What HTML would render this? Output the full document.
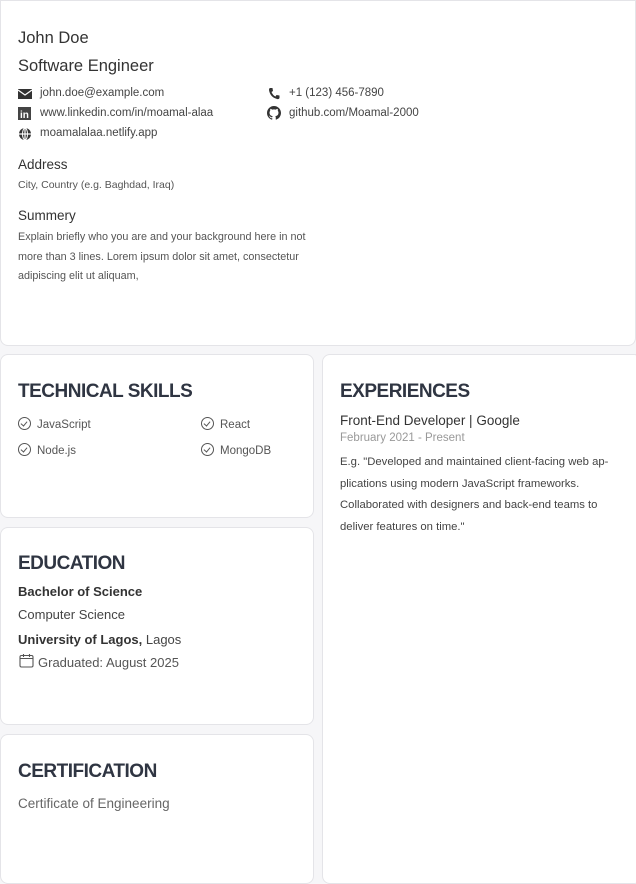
<!DOCTYPE html>
<html><head><style>
*{box-sizing:border-box;margin:0;padding:0}
body{width:636px;height:871px;background:#f6f6f8;font-family:"Liberation Sans",sans-serif;color:#333a45;position:relative;overflow:hidden}
.card{position:absolute;background:#fff;border:1px solid #e4e4e8;border-radius:8px}
.t{position:absolute;white-space:nowrap}
h2{position:absolute;font-size:19px;font-weight:bold;color:#2f3542;letter-spacing:-0.5px}
.s{font-size:11.5px;color:#444}
svg{position:absolute}
.ck{display:inline-block;width:13px;height:13px;border:1.3px solid #555;border-radius:50%;vertical-align:-2px;margin-right:6px;position:relative}
.ck:after{content:"";position:absolute;left:3px;top:1.5px;width:3px;height:5px;border:solid #555;border-width:0 1.3px 1.3px 0;transform:rotate(40deg)}
</style></head><body>
<div class="card" style="left:0;top:0;width:636px;height:346px;border-radius:0 0 8px 8px"></div>
<div class="t" style="left:18px;top:29px;font-size:16.5px;color:#333">John Doe</div>
<div class="t" style="left:18px;top:57px;font-size:16.5px;color:#333">Software Engineer</div>

<svg style="left:18px;top:88px" width="14" height="12" viewBox="0 0 14 12"><rect x="0" y="1" width="14" height="10" fill="#333"/><path d="M0 2 L7 7 L14 2" stroke="#fff" stroke-width="1.3" fill="none"/></svg>
<div class="t s" style="left:40px;top:87px">john.doe@example.com</div>
<svg style="left:18px;top:107px" width="13" height="13"><rect width="13" height="13" fill="#444"/><text x="2" y="11" font-size="10" font-weight="bold" fill="#fff" font-family="Liberation Sans">in</text></svg>
<div class="t s" style="left:40px;top:107px">www.linkedin.com/in/moamal-alaa</div>
<svg style="left:18px;top:127px" width="14" height="14" viewBox="0 0 14 14"><circle cx="7" cy="7" r="6" fill="#333"/><path d="M1 7h12M7 1v12" stroke="#fff" stroke-width="1.2"/><ellipse cx="7" cy="7" rx="2.5" ry="6" fill="none" stroke="#fff" stroke-width="1"/></svg>
<div class="t s" style="left:40px;top:127px">moamalalaa.netlify.app</div>
<svg style="left:268px;top:87px" width="12" height="13" viewBox="0 0 12 13"><path d="M2 1 L4.5 1 L5 4 L3.5 5 Q5 8.5 7.5 9.5 L8.5 8 L11.5 8.5 L11.5 11 Q11 12.5 9 12 Q2 10 1 3 Q1 1.2 2 1Z" fill="#333"/></svg>
<div class="t s" style="left:289px;top:87px">+1 (123) 456-7890</div>
<svg style="left:267px;top:106px" width="14" height="14" viewBox="0 0 16 16"><path fill="#333" d="M8 0C3.580 0 0 3.58 0 8c0 3.54 2.29 6.53 5.47 7.59.4.07.55-.17.55-.38v-1.330c-2.23.48-2.7-1.07-2.7-1.07-.36-.92-.89-1.170-.89-1.17-.73-.5.05-.49.05-.49.8.06 1.23.83 1.23.83.72 1.23 1.87.87 2.33.67.07-.52.28-.87.51-1.07-1.78-.2-3.64-.89-3.64-3.95 0-.87.31-1.59.82-2.15-.08-.2-.36-1.02.08-2.12 0 0 .67-.21 2.2.82a7.6 7.6 0 014 0c1.53-1.04 2.2-.82 2.2-.82.44 1.1.16 1.92.08 2.12.51.56.82 1.27.82 2.15 0 3.070-1.87 3.75-3.65 3.95.29.25.54.73.54 1.48v2.2c0 .21.15.46.55.38A8 8 0 0016 8c0-4.420-3.58-8-8-8z"/></svg>
<div class="t s" style="left:289px;top:107px">github.com/Moamal-2000</div>

<div class="t" style="left:18px;top:157px;font-size:13.5px;color:#333">Address</div>
<div class="t" style="left:18px;top:179px;font-size:10.5px;color:#555">City, Country (e.g. Baghdad, Iraq)</div>
<div class="t" style="left:18px;top:208px;font-size:13.5px;color:#333">Summery</div>
<div style="position:absolute;left:18px;top:228px;width:304px;font-size:10.8px;line-height:19.5px;color:#555">Explain briefly who you are and your background here in not more than 3 lines. Lorem ipsum dolor sit amet, consectetur adipiscing elit ut aliquam,</div>

<div class="card" style="left:0;top:354px;width:314px;height:164px"></div>
<h2 style="left:18px;top:381px">TECHNICAL SKILLS</h2>
<div class="t s" style="left:18px;top:417px;color:#555"><span class="ck"></span>JavaScript</div>
<div class="t s" style="left:201px;top:417px;color:#555"><span class="ck"></span>React</div>
<div class="t s" style="left:18px;top:443px;color:#555"><span class="ck"></span>Node.js</div>
<div class="t s" style="left:201px;top:443px;color:#555"><span class="ck"></span>MongoDB</div>

<div class="card" style="left:0;top:527px;width:314px;height:198px"></div>
<h2 style="left:18px;top:553px">EDUCATION</h2>
<div class="t" style="left:18px;top:584px;font-size:13px;font-weight:bold;color:#333">Bachelor of Science</div>
<div class="t" style="left:18px;top:607px;font-size:13px;color:#444">Computer Science</div>
<div class="t" style="left:18px;top:632px;font-size:13px;color:#444"><b style="color:#333">University of Lagos,</b> Lagos</div>
<svg style="left:19px;top:653px" width="15" height="15" viewBox="0 0 15 15"><rect x="1" y="2.5" width="13" height="11.5" rx="1.5" fill="none" stroke="#555" stroke-width="1.1"/><path d="M1 5.5h13M4.5 1v3M10.5 1v3" stroke="#555" stroke-width="1.1"/></svg>
<div class="t" style="left:38px;top:655px;font-size:13px;color:#555">Graduated: August 2025</div>

<div class="card" style="left:0;top:734px;width:314px;height:150px"></div>
<h2 style="left:18px;top:761px">CERTIFICATION</h2>
<div class="t" style="left:18px;top:796px;font-size:13.5px;color:#666">Certificate of Engineering</div>

<div class="card" style="left:322px;top:354px;width:320px;height:530px"></div>
<h2 style="left:340px;top:381px">EXPERIENCES</h2>
<div class="t" style="left:340px;top:413px;font-size:13.5px;color:#333">Front-End Developer | Google</div>
<div class="t" style="left:340px;top:432px;font-size:11.5px;color:#999">February 2021 - Present</div>
<div style="position:absolute;left:340px;top:452px;width:270px;font-size:11.3px;line-height:21.5px;color:#444">E.g. "Developed and maintained client-facing web ap-plications using modern JavaScript frameworks. Collaborated with designers and back-end teams to deliver features on time."</div>
</body></html>
